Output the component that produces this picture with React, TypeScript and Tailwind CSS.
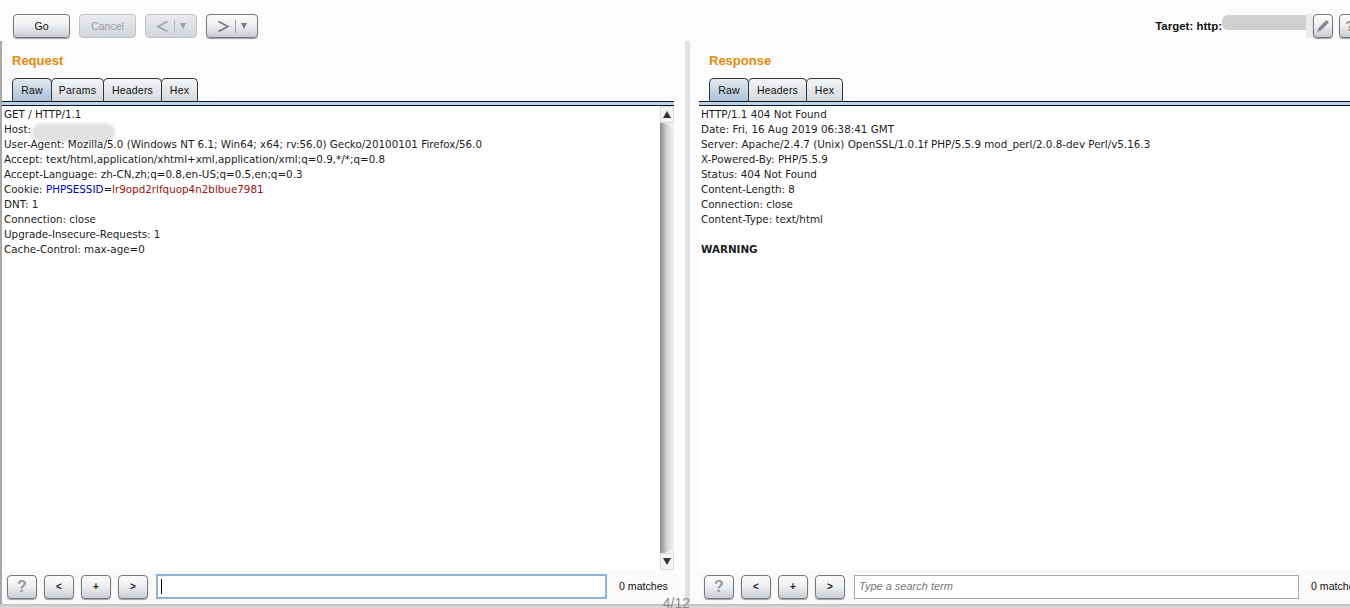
import React from 'react';

const btn =
  'flex items-center justify-center rounded-[4px] border border-[#77797c] bg-gradient-to-b from-[#fbfbfc] via-[#eceef1] to-[#c9ccd2] shadow-[0_1px_1px_#9a9a9a]';
const btnOff =
  'flex items-center justify-center rounded-[4px] border border-[#bfc1c4] bg-gradient-to-b from-[#e9ebee] to-[#d2d5da]';

const requestLines = [
  'GET / HTTP/1.1',
  'Host:',
  'User-Agent: Mozilla/5.0 (Windows NT 6.1; Win64; x64; rv:56.0) Gecko/20100101 Firefox/56.0',
  'Accept: text/html,application/xhtml+xml,application/xml;q=0.9,*/*;q=0.8',
  'Accept-Language: zh-CN,zh;q=0.8,en-US;q=0.5,en;q=0.3',
  'COOKIE',
  'DNT: 1',
  'Connection: close',
  'Upgrade-Insecure-Requests: 1',
  'Cache-Control: max-age=0',
];

const responseLines = [
  'HTTP/1.1 404 Not Found',
  'Date: Fri, 16 Aug 2019 06:38:41 GMT',
  'Server: Apache/2.4.7 (Unix) OpenSSL/1.0.1f PHP/5.5.9 mod_perl/2.0.8-dev Perl/v5.16.3',
  'X-Powered-By: PHP/5.5.9',
  'Status: 404 Not Found',
  'Content-Length: 8',
  'Connection: close',
  'Content-Type: text/html',
];

const NavButton = ({ dir, disabled }: { dir: '<' | '>'; disabled?: boolean }) => (
  <div className={`${disabled ? btnOff : btn} h-[24px] w-[52px] gap-[5px]`}>
    <svg width="13" height="13" viewBox="0 0 13 13" fill="none" stroke={disabled ? '#a3a5a9' : '#77797c'} strokeWidth="1.7">
      {dir === '<' ? <path d="M11.5 1.5 2 6.5l9.5 5" /> : <path d="M1.5 1.5 11 6.5l-9.5 5" />}
    </svg>
    <div className={`h-[13px] w-px ${disabled ? 'bg-[#b4b6ba]' : 'bg-[#9c9ea2]'}`} />
    <svg width="6" height="6" viewBox="0 0 6 6" fill={disabled ? '#9a9ca0' : '#77797c'}>
      <path d="M0 0h6L3 6z" />
    </svg>
  </div>
);

const Tabs = ({ items, widths }: { items: string[]; widths: number[] }) => (
  <div className="flex h-[23px] pl-[10px]">
    {items.map((t, i) => (
      <div
        key={t}
        style={{ width: widths[i] }}
        className={`flex items-center justify-center rounded-t-[5px] border border-b-0 border-[#33363b] pt-[2px] text-[10.5px] tracking-[0.2px] text-[#111] ${
          i === 0
            ? 'bg-gradient-to-b from-[#e4e9ee] to-[#a9c2d8]'
            : '-ml-px bg-gradient-to-b from-[#f4f5f7] to-[#d6d8dd]'
        }`}
      >
        {t}
      </div>
    ))}
  </div>
);

const TabLine = () => (
  <div className="h-[5px] border-y border-[#10141c] bg-[#bcd2e6]" />
);

const SearchBar = ({ children, matchesClass }: { children: React.ReactNode; matchesClass: string }) => (
  <div className="flex h-[34px] shrink-0 items-center bg-[#fafafa] pb-[1px] pl-[5px]">
    <div className={`${btn} h-[24px] w-[30px] shrink-0 text-[16px] font-bold text-[#9a9a9a]`}>?</div>
    <div className={`${btn} ml-[7px] h-[24px] w-[30px] shrink-0 text-[10px] font-bold text-[#222]`}>&lt;</div>
    <div className={`${btn} ml-[7px] h-[24px] w-[30px] shrink-0 text-[10px] font-bold text-[#222]`}>+</div>
    <div className={`${btn} ml-[7px] h-[24px] w-[30px] shrink-0 text-[10px] font-bold text-[#222]`}>&gt;</div>
    {children}
    <span className={`text-[10.6px] whitespace-nowrap text-[#111] ${matchesClass}`}>0 matches</span>
  </div>
);

const Editor = ({ lines, children }: { lines: string[]; children?: React.ReactNode }) => (
  <div className="pt-[1px] pl-[2px] font-['DejaVu_Sans',sans-serif] text-[10.35px] leading-[15px] text-[#1c1c1c]">
    {lines.map((l, i) =>
      l === 'COOKIE' ? (
        <div key={i} className="whitespace-nowrap">
          Cookie: <span className="text-[#0000c0]">PHPSESSID</span>=
          <span className="text-[#a01010]">lr9opd2rlfquop4n2blbue7981</span>
        </div>
      ) : (
        <div key={i} className="relative whitespace-nowrap">
          {l}
          {l === 'Host:' && (
            <span className="absolute top-[1px] left-[28px] h-[19px] w-[83px] rounded-full bg-[#e2e2e2] blur-[1px]" />
          )}
        </div>
      ),
    )}
    {children}
  </div>
);

const Scrollbar = () => (
  <div className="flex w-[14px] shrink-0 flex-col bg-[#f1f1f1]">
    <div className="flex h-[17px] items-center justify-center border border-[#dcdcdc] bg-[#f4f4f4]">
      <svg width="8" height="7" viewBox="0 0 8 7" fill="#333">
        <path d="M4 0l4 7H0z" />
      </svg>
    </div>
    <div className="flex-1 rounded-tr-[12px] rounded-br-[12px] bg-gradient-to-r from-[#8a8a8a] via-[#d5d5d5] to-[#eeeeee]" />
    <div className="flex h-[17px] items-center justify-center border border-[#dcdcdc] bg-[#f4f4f4]">
      <svg width="8" height="7" viewBox="0 0 8 7" fill="#333">
        <path d="M0 0h8L4 7z" />
      </svg>
    </div>
  </div>
);

export default function App() {
  return (
    <div className="relative flex h-[608px] w-[1350px] flex-col overflow-hidden bg-[#fcfcfc] font-['Liberation_Sans',sans-serif]">
      {/* top toolbar */}
      <div className="flex h-[41px] shrink-0 items-start pt-[14px] pl-[13px]">
        <div className={`${btn} h-[24px] w-[57px] pt-[1px] text-[10.5px] text-[#111]`}>Go</div>
        <div className={`${btnOff} ml-[9px] h-[24px] w-[57px] pt-[1px] text-[10.5px] text-[#9a9ca0]`}>Cancel</div>
        <div className="ml-[9px]">
          <NavButton dir="<" disabled />
        </div>
        <div className="ml-[9px]">
          <NavButton dir=">" />
        </div>
        <div className="ml-auto flex h-[24px] items-center">
          <span className="pt-[2px] text-[11.5px] font-bold text-[#111]">Target: http:</span>
          <div className="flex h-[24px] items-start">
            <div className="mt-[1px] h-[15px] w-[84px] rounded-l-[6px] bg-[#cfcfcf]" />
            <div className="h-[24px] w-[7px] bg-[#ececec]" />
          </div>
          <div className={`${btn} h-[24px] w-[20px]`}>
            <svg width="14" height="14" viewBox="0 0 14 14" fill="#8a8a8a">
              <path d="M10.5 1l2.5 2.5-8 8L2 12.5 1 13l.5-1 1-3z" />
            </svg>
          </div>
          <div className={`${btn} ml-[6px] mr-[-10px] h-[24px] w-[21px] text-[15px] font-bold text-[#9a9a9a]`}>?</div>
        </div>
      </div>

      <div className="flex min-h-0 flex-1">
        {/* request */}
        <div className="flex w-[674px] shrink-0 flex-col border-l-2 border-[#a8a8a8]">
          <div className="h-[37px] pt-[12px] pl-[10px] text-[13px] leading-[16px] font-bold text-[#e8890c]">Request</div>
          <Tabs items={['Raw', 'Params', 'Headers', 'Hex']} widths={[40, 53, 59, 37]} />
          <TabLine />
          <div className="flex min-h-0 flex-1 bg-white">
            <div className="min-w-0 flex-1">
              <Editor lines={requestLines} />
            </div>
            <Scrollbar />
          </div>
          <SearchBar matchesClass="ml-[12px]">
            <div className="ml-[8px] flex h-[25px] w-[451px] shrink-0 items-center border-2 border-[#8db4d6] bg-white pl-[3px]">
              <div className="h-[15px] w-px bg-black" />
            </div>
          </SearchBar>
        </div>

        {/* splitter */}
        <div className="ml-[11px] w-[5px] shrink-0 bg-[#dfe1e6]" />

        {/* response */}
        <div className="ml-[9px] flex min-w-0 flex-1 flex-col overflow-hidden">
          <div className="h-[37px] pt-[12px] pl-[10px] text-[13px] leading-[16px] font-bold text-[#e8890c]">Response</div>
          <Tabs items={['Raw', 'Headers', 'Hex']} widths={[40, 59, 37]} />
          <TabLine />
          <div className="min-h-0 flex-1 bg-white">
            <Editor lines={responseLines}>
              <div className="mt-[15px] font-bold">WARNING</div>
            </Editor>
          </div>
          <SearchBar matchesClass="ml-[12px]">
            <div className="ml-[9px] flex h-[24px] w-[445px] shrink-0 items-center border border-[#a9a9a9] bg-white pl-[4px] text-[11px] text-[#777] italic">
              Type a search term
            </div>
          </SearchBar>
        </div>
      </div>

      {/* window bottom edge and page counter */}
      <div className="h-[4px] shrink-0 bg-gradient-to-b from-[#bdbdbd] to-[#dedede]" />
      <div className="absolute right-[660px] bottom-[-6px] text-[14px] text-[#8a8a8a]">4/12</div>
    </div>
  );
}
